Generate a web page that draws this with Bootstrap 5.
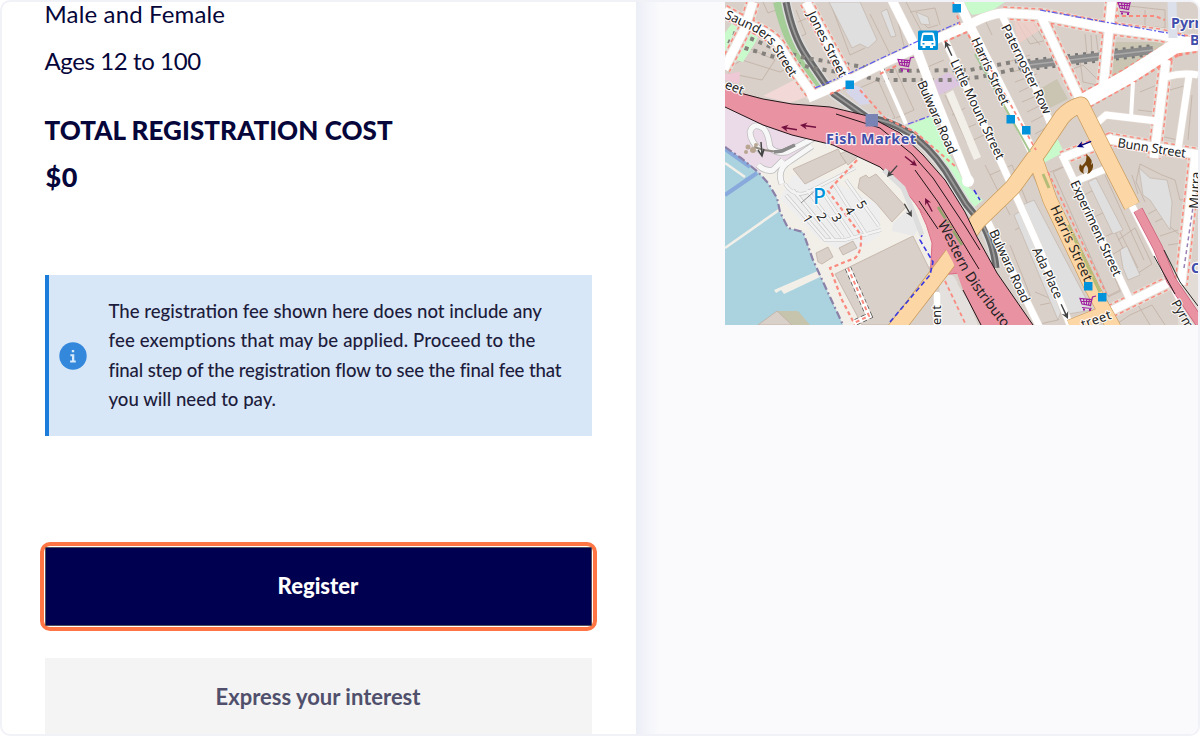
<!DOCTYPE html>
<html lang="en">
<head>
  <meta charset="UTF-8">
  <meta name="viewport" content="width=device-width, initial-scale=1">
  <title>Registration</title>
  <link href="https://cdn.jsdelivr.net/npm/bootstrap@5.3.0/dist/css/bootstrap.min.css" rel="stylesheet">
  <style>
    body { background: #fff; color: #06063a; font-family: Lato, "Open Sans", sans-serif; overflow: hidden; }
    .page-frame { width: 1200px; height: 736px; border: 2px solid #f1f1f8; border-radius: 10px; }
    .details { width: 634px; padding: 0 44.5px 0 42.5px; }
    .side { background: linear-gradient(to right, #eceef6 0, #f3f4fa 10px, #fafafc 24px); padding-left: 89px; }
    .facts { margin-top: -12px; }
    .fact { font-size: 24px; line-height: 47px; height: 47px; letter-spacing: .15px; }
    .fact-ages { letter-spacing: -.4px; }
    .cost { margin-top: 23px; font-weight: 900; line-height: 47px; }
    .cost-title { font-size: 26px; letter-spacing: .05px; }
    .cost-sum { font-size: 27px; height: 47px; line-height: 46px; padding-left: 1px; letter-spacing: .5px; }
    .fee-note { margin-top: 74px; height: 161px; background: #d8e7f7; border: 0; border-left: 4px solid #1b7cd9; border-radius: 0; color: #1d1c3c; padding: 0 0 0 10px; gap: 22px; font-size: 18.6px; line-height: 29.2px; font-weight: 500; }
    .note-wide { letter-spacing: .14px; }
    .note-tight { letter-spacing: -.13px; }
    .focus-box { margin: 106px -5px 0; border: 4px solid #ff7644; border-radius: 10px; padding: 1px; }
    .btn-register { height: 79px; background: #000050; border: 1px solid #50505c; color: #fff; font-size: 22px; font-weight: 900; border-radius: 1px; padding: 0 0 2px; }
    .btn-interest { margin-top: 27px; height: 90px; background: #f4f4f4; color: #50506c; border: 0; border-radius: 0; font-size: 22px; font-weight: 700; padding: 0 0 13px; }

    /* map */
    .map { display: block; width: 473px; height: 323px; }
    .map .casing { fill: none; stroke: #e6ddd6; }
    .map .foot { fill: none; stroke: #fa8a7e; stroke-dasharray: 4 3; }
    .map .road { fill: none; stroke: #fff; stroke-linejoin: round; }
    .map .bld { fill: #d9d0c9; stroke: #c0b0a4; stroke-width: .8; }
    .map .ln { fill: none; stroke: #c0b0a4; stroke-width: .8; }
    .map .plain { fill: #dfdfdf; stroke: #c0b0a4; stroke-width: .6; }
    .map text { font-family: "Noto Sans", sans-serif; font-size: 12.8px; fill: #222; stroke: #fff; stroke-width: 2.4px; stroke-opacity: .85; paint-order: stroke; stroke-linejoin: round; }
    .map .station { font-weight: 700; font-size: 14.3px; fill: #414eac; }
  </style>
</head>
<body>

  <div class="page-frame d-flex overflow-hidden">
    <main class="details flex-shrink-0">
      <div class="facts">
        <div class="fact">Male and Female</div>
        <div class="fact fact-ages">Ages 12 to 100</div>
      </div>
      <div class="cost">
        <div class="cost-title text-nowrap">TOTAL REGISTRATION COST</div>
        <div class="cost-sum">$0</div>
      </div>

      <div class="fee-note alert d-flex align-items-center mb-0">
        <svg width="28" height="28" viewBox="0 0 28 28" class="flex-shrink-0">
          <circle cx="14" cy="14" r="13.7" fill="#3388dc"/>
          <path d="M12.8 8h2.4v2.2h-2.4zM11.4 12.3h3.900v6.300h1.500v1.900h-5.700v-1.900h1.900v-4.400h-1.600z" fill="#d8e9fb"/>
        </svg>
        <div class="note-text text-nowrap">The registration fee shown here does not include any<br><span class="note-wide">fee exemptions that may be applied. Proceed to the</span><br><span class="note-tight">final step of the registration flow to see the final fee that</span><br>you will need to pay.</div>
      </div>

      <div class="focus-box">
        <button type="button" class="btn btn-register w-100 d-block">Register</button>
      </div>
      <button type="button" class="btn btn-interest w-100 d-block">Express your interest</button>
    </main>

    <aside class="side flex-grow-1">
      <svg class="map" viewBox="725 2 473 323">
        <defs>
          <!-- streets with footpaths drawn along both sides -->
          <g id="lined-roads">
            <path d="M724 11L747 24Q771 34 779 45L795 70L813 95"/>
            <path d="M753 2L744 30L724 69"/>
            <path d="M806 2L848 80"/>
            <path d="M1040 14L1081 102"/>
            <path d="M1112 0L1103 90"/>
            <path d="M1108 139L1200 155"/>
            <path d="M1166 60L1154 158"/>
            <path d="M1111 311L1170 282"/>
            <path d="M1196 150L1181 285"/>
            <path d="M1062 158L1113 138"/>
            <path d="M1003 13L1040 15L1107 28L1160 35L1200 45"/>
          </g>
          <g id="wide-roads">
            <path d="M892 0L917 50L935 98L968 180"/>
            <path d="M958 0L972 30L1010 105L1034 155"/>
            <path d="M808 98L850 80L880 65L932 41L967 26Q990 13 1005 13"/>
          </g>
          <g id="narrow-roads">
            <path d="M945 40L1000 160L1040 250L1070 325"/>
            <path d="M1002 15L1040 97L1056 138"/>
            <path d="M984 214L1020 287L1040 328"/>
            <path d="M1062 155L1130 300M1076 181L1108 168"/>
            <path d="M1131 204L1157 255L1180 300"/>
            <path d="M1098 122L1106 115L1157 121M1166 77Q1183 72 1198 75M1189 76L1178 150"/>
          </g>
          <path id="saunders" d="M724 18L748 29Q764 36 772 48L794 84"/>
          <path id="western" d="M937 224C948 241 953 257 966 278S994 315 1012 340"/>
          <path id="shore" d="M725 147L741 158L758 172L768 183L777 198L780 212L788 228L803 232L813 260L830 297L843 325"/>
          <path id="railway" d="M786 2Q793 37 807 57L824 82L834 94L868 118Q912 122 945 170L966 204L983 225Q994 246 996 268"/>
          <path id="paths" d="M763 153Q750 142 750 132Q753 122 763 128Q768 132 770 147Q775 154 787 152L818 136M758 165Q765 172 773 170L783 160M782 184Q776 169 790 161L812 146"/>
          <path id="rows" d="M786 195L825 240H845L881 230M793 190L834 240M807 190L843 238M820 188L853 237M834 184L867 236M846 180L879 226M785 184Q795 200 812 190L855 168"/>
          <path id="bigfish" d="M895 330L945 265L977 222L1013 187L1040 150L1062 117Q1070 108 1081 105L1110 163L1132 206"/>
          <path id="harris" d="M1036 160L1050 200L1092 288L1114 328M1070 327L1105 313"/>
          <g id="cart" fill="none" stroke="#a020a0" stroke-width="1.2">
            <path d="M17 1L13.500 2L11.500 10.500L3 9L1 3.500L13 4.500M2 6.500H12.500M4.500 4L5.500 10M7.500 4V10M10.500 4L9.500 10M3 12.500L12.500 13.500"/>
            <path d="M4 14.500h2M10 15h2" stroke-width="2"/>
          </g>
          <path id="arrow" d="M0 0L8 -4L6 -.8H18V.8H6L8 4z"/>
        </defs>

        <rect x="725" y="2" width="473" height="323" fill="#d9d0c9"/>

        <!-- waterfront -->
        <path d="M725 105L770 125L830 140L880 165L925 215L940 250L892 325H725z" fill="#f2efe9"/>
        <path d="M725 108L770 127L808 138L800 155L780 168L758 173L725 148z" fill="#ebdbe8"/>
        <path d="M792 176L830 180L880 205L880 235L850 255L820 240L780 199z" fill="#eee"/>
        <path d="M725 147L741 158L758 172L768 183L777 198L780 212L788 228L803 232L813 260L830 297L843 325H725z" fill="#aad3df"/>
        <path d="M725 149L750 167M725 195L757 173" stroke="#87a9dc" stroke-width="4"/>
        <path d="M725 163L745 177M725 248L779 210" stroke="#f2efe9" stroke-width="2.600"/>
        <path d="M774 290L820 270L820 277L784 294L781 290L776 293z" fill="#f2efe9"/>
        <path d="M777 311H798L810 325H785z" fill="#c6c4ac"/>
        <path d="M758 325L777 311L792 325z" class="bld"/>
        <use href="#shore" fill="none" stroke="#8b80a7" stroke-width="2.200" stroke-dasharray="8 3 2 3"/>
        <g fill="none">
          <use href="#paths" stroke="#bdbdbd" stroke-width="6.500"/>
          <use href="#paths" stroke="#f7f7f7" stroke-width="5"/>
        </g>
        <path d="M754 147L764 150L778 152L794 145" fill="none" stroke="#8f8982" stroke-width="2"/>
        <path d="M774 152L782 151L795 145" fill="none" stroke="#8a8a8a" stroke-width="3.500"/>
        <g fill="#b9a692"><circle cx="748" cy="147" r="2.500"/><circle cx="753" cy="150" r="3"/><circle cx="746" cy="152" r="2"/><circle cx="756" cy="145" r="2"/></g>
        <path d="M761 142L762 155M758 150L762 156L764 149" fill="none" stroke="#444" stroke-width="1.500"/>

        <!-- car park rows -->
        <g fill="none">
          <use href="#rows" stroke="#c8c8c8" stroke-width="3.600"/>
          <use href="#rows" stroke="#f3f3f3" stroke-width="2.400"/>
        </g>
        <path d="M801 203L816 190" stroke="#777" stroke-width=".8"/>
        <g class="bld">
          <path d="M793 169L838 149L846 163L805 184z"/>
          <path d="M840 154L857 146L862 153L848 165z"/>
          <path d="M860 178L866 175L869 178L876 174L906 207L892 222L876 203L858 188z"/>
          <path d="M816 253L828 247L833 257L822 264L818 262z"/>
          <path d="M839 248L853 241L857 248L843 255z"/>
          <path d="M835 274L913 236L930 270L928 285L892 325H862z"/>
        </g>
        <path d="M914 236L920 225L908 210L893 223L892 231z" fill="#e9e9e9"/>
        <path d="M857 160L843 175L828 191L840 207L861 235Q862 252 855 258L830 268L842 300L855 325" class="foot" stroke-width="2.200"/>
        <path d="M848 268L869 316L854 323" fill="none" stroke="#555" stroke-width="6.500" stroke-dasharray="4 3"/>
        <path d="M848 268L869 316L854 323" fill="none" stroke="#fff" stroke-width="5"/>
        <path d="M848 268L869 316L854 323" class="foot" stroke-width="2"/>

        <!-- building blocks -->
        <g class="ln">
          <path d="M763 2L768 13L779 9M725 70L742 60L780 72L800 62M742 45L775 60L762 80L728 73M798 22L810 17L825 43L843 76M806 60L793 40L806 34L796 10M830 2L850 55L865 48M870 14L890 54M895 10L905 50M910 12L935 8L940 25M920 20L928 28L938 25M906 2L925 38"/>
          <path d="M855 90L878 80L895 118L880 122M882 75L895 68L914 110L896 118M925 68L944 60M927 75L945 93M945 95L967 143L986 134M952 115L965 108M962 130L976 124M985 165L1010 215M990 175L1012 165L1034 220L1015 230M1040 190L1030 170"/>
          <path d="M985 20L992 35M1008 62L1030 55M1012 72L1034 66M1015 82L1037 74M1019 92L1040 82M1022 102L1046 92M1027 112L1049 101M1031 122L1052 111M1035 134L1056 122M1016 20L1030 44L1048 40M1024 25L1040 45M1034 24L1044 40"/>
          <path d="M1062 65L1100 60M1065 72L1083 65L1098 80M1080 60L1083 82L1097 85M1085 34L1087 55M1091 35L1092 54M1096 35L1098 50M1120 5L1165 10V28L1118 23M1145 10V26M1116 62L1160 58L1120 80M1140 92L1157 85L1154 112L1138 110M1170 90L1184 86L1178 140L1160 136M1192 95L1188 140"/>
          <path d="M1050 172L1065 166L1105 250L1090 258M1078 198L1098 188M1088 220L1109 210M1098 240L1115 232L1123 248L1112 255M1105 175L1144 260M1132 175L1138 194M1118 240L1135 228L1152 264L1135 275L1125 265M1120 232L1138 268M1145 202L1136 182L1140 164L1162 175L1175 180L1180 200L1198 198M1148 214L1165 205L1168 225L1180 235M1155 222L1170 215M1160 236L1178 230M1168 245L1188 242M1105 288L1122 280L1128 296M1108 297L1125 289M1135 300L1150 325M1115 325L1130 315L1152 305L1165 325"/>
          <path d="M985 285L1005 325M965 265L985 300L968 310M1010 245L1032 300M1035 292L1054 300L1058 320L1035 325M1050 303L1040 305"/>
        </g>
        <g class="plain">
          <path d="M829 2H860L877 40L868 48L860 44L852 48z"/>
          <path d="M887 9L896 36L891 37L881 12z"/>
          <path d="M1014 215L1032 205L1068 292L1058 320z"/>
          <path d="M1020 206L1034 200L1092 310L1062 315z"/>
          <path d="M1088 182L1096 178L1123 230L1113 234z"/>
          <path d="M1139 168L1150 178L1167 180L1172 202L1170 230L1150 200L1143 195z"/>
          <path d="M1120 250L1127 246L1134 262L1140 275L1128 280L1123 268z"/>
          <path d="M916 12L928 17L930 25L921 24z"/>
        </g>
        <path d="M1053 172L1066 166L1120 290L1108 296z" class="bld"/>
        <path d="M946 94L953 90L981 157L974 160z" fill="#f2efe9"/>
        <path d="M929 84L948 72L962 84L935 97z" fill="#dcc5de"/>
        <path d="M732 23L760 33L755 43L743 62L725 57V33z" fill="#c8facc"/>
        <path d="M763 96L798 78L806 97L790 103z" fill="#f2d9d7"/>
        <path d="M725 74L740 72L739 84L725 80z" fill="#efc8d6"/>
        <path d="M852 84L862 88L870 104L860 105L846 92z" fill="#d6d6ea"/>
        <path d="M1014 20L1034 18L1040 30L1018 44z" fill="#f4cfc9" opacity=".7"/>
        <path d="M1038 90L1057 79L1068 99L1050 108z" fill="#c9c5b2"/>
        <path d="M1111 42L1155 42L1176 43L1110 79z" fill="#c9c5b2"/>
        <path d="M905 127L932 116L946 148L966 185L983 200L965 215L948 180L925 145z" fill="#c8facc"/>
        <path d="M1037 158L1055 134L1064 152L1042 164z" fill="#c8facc"/>
        <path d="M962 2H1005L990 12L972 15z" fill="#c8facc"/>
        <path d="M939 270Q955 272 958 285L968 300L978 325H940z" fill="#e3e0dd"/>
        <path d="M1178 280L1198 260V325H1178z" fill="#e3dbd5"/>

        <!-- rail -->
        <path d="M777 2Q786 40 802 60L818 86" fill="none" stroke="#a4cd97" stroke-width="8"/>
        <g fill="none">
          <use href="#railway" stroke="#ddd" stroke-width="10"/>
          <use href="#railway" stroke="#686868" stroke-width="7"/>
          <use href="#railway" stroke="#999" stroke-width="1.800"/>
        </g>
        <path d="M733 33L752 39L778 50L805 58L858 66L885 71L970 70L1018 61M728 41L745 48L778 58L812 68L845 73L880 80H950L980 77L1020 68" fill="none" stroke="#84807c" stroke-width="4" stroke-dasharray="4 5"/>
        <path d="M1020 66L1153 50" stroke="#777" stroke-width="12" stroke-dasharray="3 5"/>
        <path d="M1020 66L1153 50" stroke="#8a8a8a" stroke-width="8"/>
        <path d="M1020 66L1153 50" stroke="#aaa" stroke-width="1.500"/>

        <!-- streets -->
        <use href="#lined-roads" class="casing" stroke-width="15"/>
        <use href="#lined-roads" class="foot" stroke-width="13.500"/>
        <use href="#lined-roads" class="casing" stroke-width="10.500"/>
        <use href="#wide-roads" class="casing" stroke-width="10"/>
        <use href="#narrow-roads" class="casing" stroke-width="8"/>
        <path d="M1080 103L1127 77L1175 48L1200 43" class="foot" stroke-width="18"/>
        <g class="road">
          <use href="#lined-roads" stroke-width="8.500"/>
          <use href="#wide-roads" stroke-width="9"/>
          <use href="#narrow-roads" stroke-width="6.800"/>
          <path d="M1080 103L1127 77L1175 46L1200 43" stroke-width="15"/>
          <path d="M1133 82L1131 118M880 65L906 124" stroke-width="4"/>
          <circle cx="968" cy="181" r="6" fill="#fff" stroke="none"/>
          <path d="M937 325V295" stroke-width="6.500" stroke-linecap="round"/>
        </g>
        <path d="M815 88L850 73L933 34L960 22M1040 10L1105 22L1185 36M908 124L930 116" fill="none" stroke="#5a5aee" stroke-width="1.200" stroke-dasharray="6 2 2 2"/>
        <path d="M830 94L850 86M880 74L900 64M944 42L967 32L978 54M1115 16H1155L1165 20M860 90L885 118L915 132L955 166" class="foot" stroke-width="2"/>
        <path d="M1172 2L1173 38" stroke="#dce0ea" stroke-width="9"/>
        <path d="M1184 268L1193 207" fill="none" stroke="#9a80b4" stroke-width="1.500" stroke-dasharray="4 3"/>

        <!-- slip road, then the crossing street, then the motorway above it -->
        <path d="M903 188L924 214L938 223L960 273L940 275L930 281L932 243Q922 205 903 188z" fill="#e892a2" stroke="#db6b83"/>
        <g fill="none" stroke-linejoin="round">
          <use href="#bigfish" stroke="#c99b5c" stroke-width="17"/>
          <use href="#harris" stroke="#c99b5c" stroke-width="15"/>
          <use href="#bigfish" stroke="#fcd6a4" stroke-width="15.600"/>
          <use href="#harris" stroke="#fcd6a4" stroke-width="13.800"/>
        </g>
        <path d="M725 88L763 99L792 104L830 107L868 116L900 133L923 155L945 180L965 212L977 237L997 273L1033 325H981L963 290L953 262L938 235L920 208L903 188L880 167L833 145L792 135L763 125L725 107z" fill="#e892a2"/>
        <path d="M740 93L763 99L792 104L830 107L868 116L900 133L923 155L945 180L965 212L977 237L997 273L1033 325M725 107L763 125L792 135L833 145L880 167L903 188M963 290L981 325M836 114L880 128L912 154L933 178L965 226L980 250M919 201L938 229M915 170L938 202L979 269" fill="none" stroke="#221318" stroke-width="1"/>
        <path d="M938 207L962 245" stroke="#91a66f" stroke-width="2.500"/>
        <path d="M1138 210L1158 248L1171 280L1200 323" fill="none" stroke="#c95b77" stroke-width="10"/>
        <path d="M1138 210L1158 248L1171 280L1200 323" fill="none" stroke="#e892a2" stroke-width="8.600"/>
        <path d="M1154 256L1175 294M1164 250L1180 282L1198 306" fill="none" stroke="#222" stroke-width="1"/>

        <path d="M1043 174L1049 188M1068 225L1100 292" fill="none" stroke="#b4bd78" stroke-width="3"/>
        <path d="M1048 172L1068 213L1106 293" class="foot" stroke-width="1.600"/>
        <path d="M975 54L1030 152" fill="none" stroke="#a8c692" stroke-width="2"/>
        <path d="M890 322L930 275L933 262L920 240L922 235M974 190L980 200" fill="none" stroke="#3838e0" stroke-width="1.600" stroke-dasharray="5 3"/>
        <path d="M945 281L966 325M953 2L960 25M980 50L1036 150" class="foot" stroke-width="1.800"/>
        <path d="M884 170L903 188L914 214L922 235" fill="none" stroke="#ddd" stroke-width="5"/>

        <!-- direction arrows -->
        <g fill="#731040">
          <use href="#arrow" transform="translate(781 127) rotate(10) scale(.9)"/>
          <use href="#arrow" transform="translate(800 125) rotate(8) scale(.9)"/>
          <use href="#arrow" transform="translate(925 198) rotate(62) scale(.85)"/>
          <use href="#arrow" transform="translate(917 166) rotate(218) scale(.85)"/>
        </g>
        <g fill="#444">
          <use href="#arrow" transform="translate(887 177) rotate(-48) scale(.85)"/>
          <use href="#arrow" transform="translate(912 217) rotate(240) scale(.85)"/>
          <use href="#arrow" transform="translate(945 41) rotate(65) scale(.9)"/>
          <use href="#arrow" transform="translate(1068 319) rotate(245) scale(.9)"/>
          <use href="#arrow" transform="translate(1077 147) rotate(-22) scale(.85)" fill="#00007c"/>
        </g>

        <!-- street names -->
        <text><textPath href="#saunders" textLength="92">Saunders Street</textPath></text>
        <text transform="translate(807 14) rotate(63)" textLength="72">Jones Street</text>
        <text transform="translate(724 88) rotate(21)">eet</text>
        <text transform="translate(917 83) rotate(66)" textLength="79">Bulwara Road</text>
        <text transform="translate(950 62) rotate(64.5)" textLength="109">Little Mount Street</text>
        <text transform="translate(971 40) rotate(65)" textLength="73">Harris Street</text>
        <text transform="translate(1001 27) rotate(64)" textLength="98">Paternoster Row</text>
        <text transform="translate(1117 147) rotate(9)" textLength="69">Bunn Street</text>
        <text transform="translate(1070 183) rotate(65)" textLength="104">Experiment Street</text>
        <text transform="translate(1050 208) rotate(65)" textLength="82" style="stroke:#fcd6a4;font-size:13.500px">Harris Street</text>
        <text transform="translate(989 232) rotate(65)" textLength="79">Bulwara Road</text>
        <text transform="translate(1032 250) rotate(65)" textLength="55">Ada Place</text>
        <text style="stroke:#e892a2;font-size:14px"><textPath href="#western" textLength="124">Western Distributo</textPath></text>
        <text transform="translate(941 325) rotate(-90)">ent</text>
        <text transform="translate(1083 329) rotate(-20)" textLength="31">treet</text>
        <text transform="translate(1171 303) rotate(60)">Pyrm</text>
        <text transform="translate(1198 209) rotate(-86)">Murra</text>

        <!-- car park -->
        <text x="813" y="203.500" style="font-size:21px;fill:#0092da;font-weight:500">P</text>
        <g text-anchor="middle">
          <text transform="translate(804 221) rotate(58)">1</text>
          <text transform="translate(818 219) rotate(58)">2</text>
          <text transform="translate(833 220) rotate(58)">3</text>
          <text transform="translate(846 213) rotate(58)">4</text>
          <text transform="translate(858 207) rotate(58)">5</text>
        </g>

        <!-- stations and stops -->
        <rect x="865.5" y="114" width="12.5" height="12.5" fill="#7984b4"/>
        <text class="station" x="826" y="144" textLength="90">Fish Market</text>
        <text class="station" x="1171" y="28">Pyrr</text>
        <text class="station" x="1190" y="45">B</text>
        <text class="station" x="1191" y="273">C</text>
        <g fill="#0092da">
          <rect x="845.5" y="80.500" width="8.500" height="8.500"/>
          <rect x="952.500" y="4" width="8.500" height="8.500"/>
          <rect x="1006.500" y="115" width="8.500" height="8.500"/>
          <rect x="1022" y="126" width="8.500" height="8.500"/>
          <rect x="1084" y="282" width="8.500" height="8.500"/>
          <rect x="1098" y="293" width="8.500" height="8.500"/>
          <rect x="918" y="30.500" width="20" height="19.500" rx="1.500"/>
        </g>
        <path d="M922 34Q922 32.500 924 32.500H932Q934 32.500 934 34L935.500 42V46H933V48H930V46H925.500V48H922.500V46H920.500V42z" fill="#fff"/>
        <path d="M923.500 35H932.500L933.500 41H922.500zM922.500 43h2v1.500h-2zM931.500 43h2v1.500h-2z" fill="#0092da"/>
        <use href="#cart" transform="translate(897 56)"/>
        <use href="#cart" transform="translate(1117 -1)"/>
        <use href="#cart" transform="translate(1079 295)"/>
        <path d="M1086 154Q1094 160 1091 165L1093 163Q1094 172 1087 174Q1090 169 1086 165Q1082 169 1084 174Q1077 171 1080 164L1082 166Q1088 161 1086 154z" fill="#70430a"/>
      </svg>
    </aside>
  </div>

  <script src="https://cdn.jsdelivr.net/npm/bootstrap@5.3.0/dist/js/bootstrap.bundle.min.js"></script>
</body>
</html>
